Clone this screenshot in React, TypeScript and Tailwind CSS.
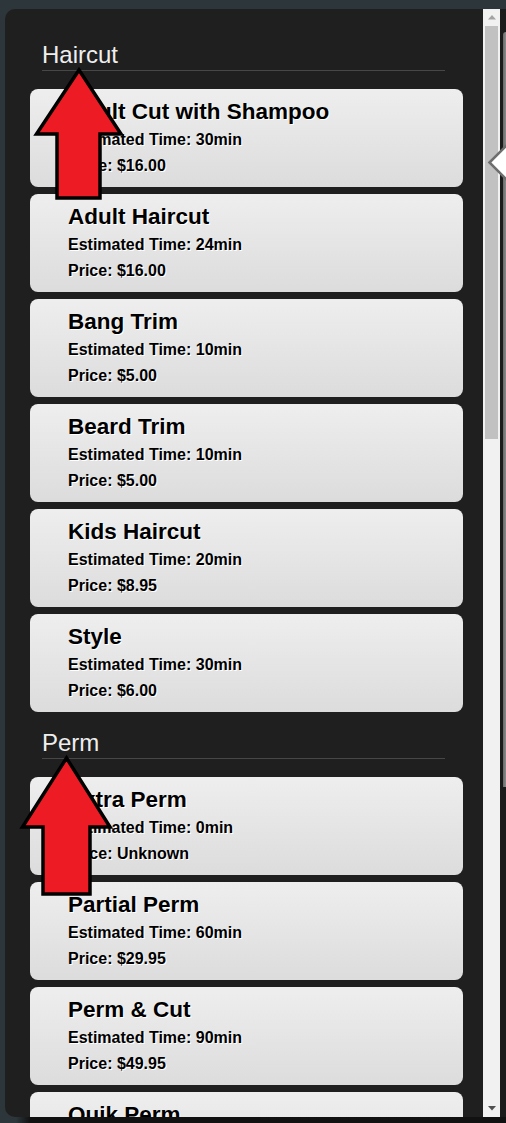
import React from "react";

type Item = { t: string; m: string; p: string };

const haircut: Item[] = [
  { t: "Adult Cut with Shampoo", m: "30min", p: "$16.00" },
  { t: "Adult Haircut", m: "24min", p: "$16.00" },
  { t: "Bang Trim", m: "10min", p: "$5.00" },
  { t: "Beard Trim", m: "10min", p: "$5.00" },
  { t: "Kids Haircut", m: "20min", p: "$8.95" },
  { t: "Style", m: "30min", p: "$6.00" },
];

const perm: Item[] = [
  { t: "Extra Perm", m: "0min", p: "Unknown" },
  { t: "Partial Perm", m: "60min", p: "$29.95" },
  { t: "Perm & Cut", m: "90min", p: "$49.95" },
  { t: "Quik Perm", m: "15min", p: "$39.95" },
];

function Card({ t, m, p }: Item) {
  return (
    <div className="h-[98px] shrink-0 rounded-[8px] bg-gradient-to-b from-[#eeeeee] to-[#dcdcdc] pl-[38px] pt-[10px] text-black [text-shadow:1px_1px_0_#ffffff]">
      <div className="text-[22.5px] font-bold leading-[26px]">{t}</div>
      <div className="mt-[2px] text-[16px] font-bold leading-[26px]">Estimated Time: {m}</div>
      <div className="text-[16px] font-bold leading-[26px]">Price: {p}</div>
    </div>
  );
}

function Section({ title, items, first }: { title: string; items: Item[]; first?: boolean }) {
  return (
    <div className={first ? "mt-[19px]" : "mt-[18px]"}>
      <div className="ml-[12px] mr-[18px] border-b border-[#474747] pb-[2px] text-[24px] leading-[26px] text-[#eeeeee]">
        {title}
      </div>
      <div className="mt-[18px] flex flex-col gap-[7px]">
        {items.map((it) => (
          <Card key={it.t} {...it} />
        ))}
      </div>
    </div>
  );
}

export default function App() {
  return (
    <div className="relative flex h-[1123px] w-[506px] flex-col overflow-hidden bg-[#2c363b] font-['Liberation_Sans',Arial,sans-serif]">
      <div className="h-[9px] shrink-0" />
      <div className="flex h-[1108px] shrink-0">
        <div className="ml-[5px] flex flex-1 overflow-hidden rounded-l-[10px] bg-[#1f1f1f]">
          <div className="flex-1 overflow-hidden pl-[25px] pr-[20px] pt-[14px]">
            <Section title="Haircut" items={haircut} first />
            <Section title="Perm" items={perm} />
          </div>
          <div className="flex w-[17px] shrink-0 flex-col bg-[#f1f1f1]">
            <div className="flex h-[17px] items-center justify-center">
              <svg width="8" height="5" viewBox="0 0 8 5">
                <polygon points="4,0 8,4.5 0,4.5" fill="#a3a3a3" />
              </svg>
            </div>
            <div className="mx-[2px] h-[413px] bg-[#c1c1c1]" />
            <div className="flex-1" />
            <div className="flex h-[17px] items-center justify-center">
              <svg width="8" height="5" viewBox="0 0 8 5">
                <polygon points="0,0 8,0 4,4.5" fill="#505050" />
              </svg>
            </div>
          </div>
          <div className="w-[3px] shrink-0 bg-[#1b1b1b]" />
        </div>
        <div className="w-[3px] shrink-0 bg-[#1b1b1b]">
          <div className="mt-[23px] h-[755px] rounded-tl-[3px] bg-gradient-to-r from-[#6a6a6a] to-[#8a8a8a]" />
        </div>
      </div>
      <div className="h-[6px] shrink-0 bg-[linear-gradient(to_right,#2c363b_0px,#2c363b_16px,#111111_30px,#111111_100%)]" />

      {/* pointer triangle on the right */}
      <svg className="absolute left-[486px] top-[143px]" width="22" height="40" viewBox="0 0 22 40">
        <polygon points="3.5,19.5 22,1 22,38" fill="#ffffff" stroke="#6e6e6e" strokeWidth="2.5" />
      </svg>

      {/* red arrow 1 */}
      <svg className="absolute left-[33px] top-[66px]" width="92" height="135" viewBox="0 0 92 135">
        <polygon
          points="46,4 88,68 67,68 67,132 24,132 24,68 3.5,68"
          fill="#ed1c24"
          stroke="#000000"
          strokeWidth="3.5"
          strokeLinejoin="miter"
        />
      </svg>

      {/* red arrow 2 */}
      <svg className="absolute left-[18px] top-[754px]" width="96" height="144" viewBox="0 0 96 144">
        <polygon
          points="48.5,4 92,73 72,73 72,140 25,140 25,73 4.5,73"
          fill="#ed1c24"
          stroke="#000000"
          strokeWidth="3.5"
          strokeLinejoin="miter"
        />
      </svg>
    </div>
  );
}
